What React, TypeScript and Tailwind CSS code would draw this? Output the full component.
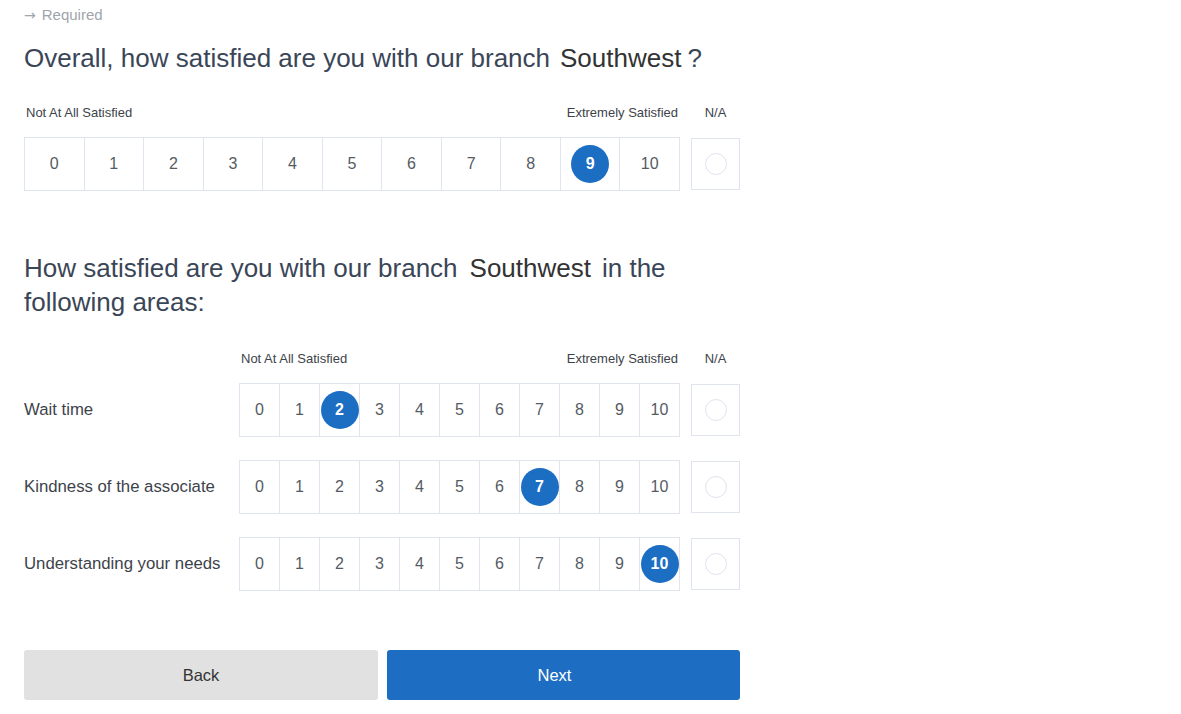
import React from 'react';

const font = { fontFamily: '"Liberation Sans", Arial, sans-serif' };

function Scale({ selected, cellClass }: { selected: number; cellClass: string }) {
  return (
    <div className="flex h-[54px] border border-[#dfe4ee] bg-white">
      {Array.from({ length: 11 }, (_, i) => (
        <div
          key={i}
          className={`${cellClass} flex items-center justify-center ${i > 0 ? 'border-l border-[#dfe4ee]' : ''}`}
        >
          {i === selected ? (
            <span className="w-[38px] h-[38px] rounded-full bg-[#1b6ec2] text-white font-bold text-[16px] flex items-center justify-center">
              {i}
            </span>
          ) : (
            <span className="text-[16px] text-[#555b63]">{i}</span>
          )}
        </div>
      ))}
    </div>
  );
}

function NaBox() {
  return (
    <div className="w-[49px] h-[52px] border border-[#dfe4ee] flex items-center justify-center bg-white">
      <span className="w-[22px] h-[22px] rounded-full border border-[#dfe4ee]" />
    </div>
  );
}

function ScaleLabels({ left }: { left: string }) {
  return (
    <div className="flex items-center text-[13px] leading-[16px] text-[#3d434a]">
      <div className={left} />
      <span className="flex-1 pl-[2px]">Not At All Satisfied</span>
      <span className="pr-[2px]">Extremely Satisfied</span>
      <span className="w-[60px] text-center pl-[11px]">N/A</span>
    </div>
  );
}

const rows = [
  { label: 'Wait time', value: 2 },
  { label: 'Kindness of the associate', value: 7 },
  { label: 'Understanding your needs', value: 10 },
];

export default function App() {
  return (
    <div className="min-h-screen bg-white" style={font}>
      <div className="w-[716px] ml-[24px]">
        <div className="mt-[6px] text-[15px] leading-[18px] text-[#a0a5ab] flex items-center">
          <span className="text-[14px] mr-[6px]" style={{ fontFamily: '"DejaVu Sans", sans-serif' }}>→</span>
          Required
        </div>

        <h1 className="mt-[17px] text-[26px] leading-[34px] text-[#3a4657]">
          Overall, how satisfied are you with our branch
          <span className="text-[#333] ml-[10px] mr-[6px]">Southwest</span>?
        </h1>

        <div className="mt-[30px]">
          <ScaleLabels left="w-0" />
        </div>
        <div className="mt-[16px] flex items-center gap-[11px]">
          <div className="w-[656px]">
            <Scale selected={9} cellClass="flex-1" />
          </div>
          <NaBox />
        </div>

        <h2 className="mt-[60px] text-[26px] leading-[34px] text-[#3a4657] w-[690px]">
          How satisfied are you with our branch
          <span className="text-[#333] ml-[12px] mr-[11px]">Southwest</span>in the following areas:
        </h2>

        <div className="mt-[32px]">
          <ScaleLabels left="w-[215px]" />
        </div>

        <div className="mt-[16px] flex flex-col gap-[23px]">
          {rows.map((r) => (
            <div key={r.label} className="flex items-center">
              <div className="w-[215px] text-[16.75px] text-[#3d434a]">{r.label}</div>
              <div className="w-[441px]">
                <Scale selected={r.value} cellClass="w-[40px] flex-1" />
              </div>
              <div className="ml-[11px]">
                <NaBox />
              </div>
            </div>
          ))}
        </div>

        <div className="mt-[59px] flex gap-[9px]">
          <button className="w-[354px] h-[50px] rounded-[3px] bg-[#e1e1e1] text-[16.5px] text-[#333]">Back</button>
          <button className="w-[353px] h-[50px] rounded-[3px] bg-[#1d6ec2] text-[16.5px] text-white pr-[18px]">Next</button>
        </div>
      </div>
    </div>
  );
}
